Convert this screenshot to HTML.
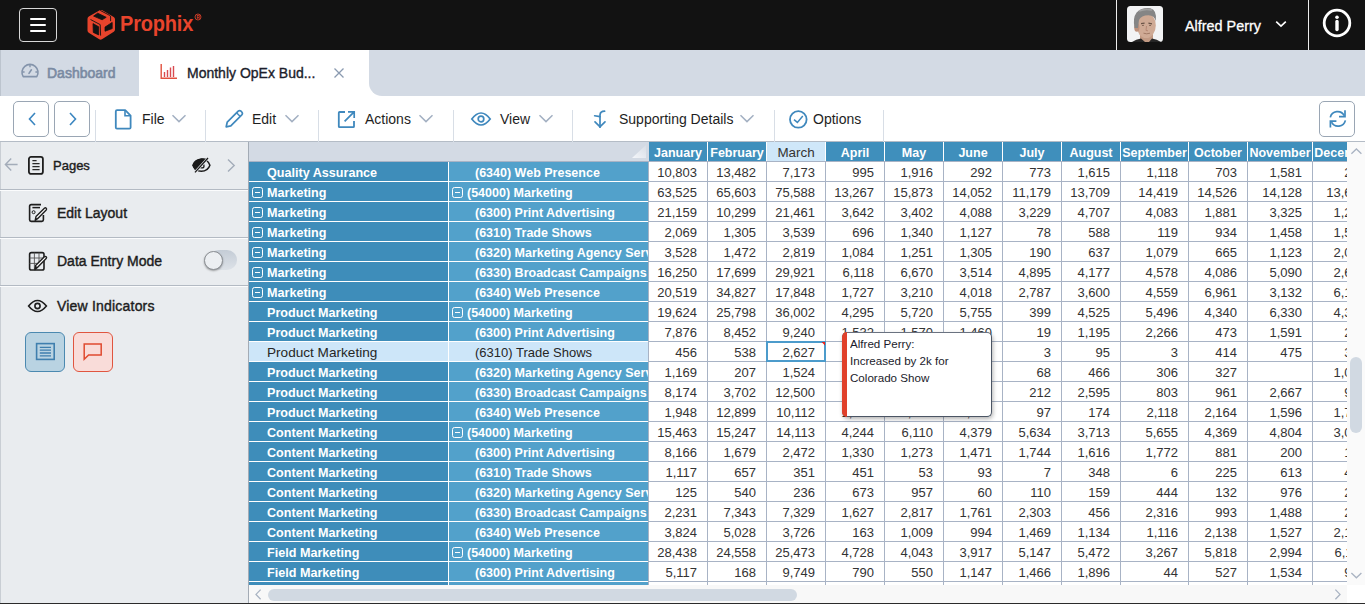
<!DOCTYPE html>
<html><head><meta charset="utf-8"><style>
*{box-sizing:border-box;margin:0;padding:0}
html,body{width:1365px;height:604px;overflow:hidden;background:#fff;font-family:"Liberation Sans",sans-serif;position:relative}
.abs{position:absolute}
#top{position:absolute;left:0;top:0;width:1365px;height:50px;background:#121212}
#hamb{position:absolute;left:19px;top:8px;width:38px;height:34px;border:1.3px solid #d8d8d8;border-radius:4px}
#hamb i{position:absolute;left:10px;width:16px;height:2px;background:#fff;border-radius:1px}
#tabs{position:absolute;left:0;top:50px;width:1365px;height:46px;background:#fff}
#tabdash{position:absolute;left:0;top:0;width:139px;height:46px;background:#d3dae4;border-left:1px solid #bcc4ce}
#tabrest{position:absolute;left:369px;top:0;width:996px;height:46px;background:#d3dae4;border-bottom-left-radius:13px}
#toolbar{position:absolute;left:0;top:96px;width:1365px;height:46px;background:#fff;border-bottom:1px solid #b4bcc6}
.tbtn{position:absolute;top:5px;width:36px;height:36px;border:1px solid #9aa6b4;border-radius:5px;background:#fff}
.sep{position:absolute;top:14px;width:1px;height:32px;background:#d8dee6}
.tl{position:absolute;top:15px;font-size:14px;color:#1e1e1e;line-height:17px;white-space:nowrap}
#left{position:absolute;left:0;top:142px;width:249px;height:462px;background:#e9ecef;border-right:1px solid #a3abb5}
.lsep{position:absolute;left:0;width:248px;height:2px;border-top:1px solid #b3bac3;background:#fbfcfd}
.ll{position:absolute;font-size:14px;color:#1d1d1d;white-space:nowrap;line-height:16px;-webkit-text-stroke:0.4px #1d1d1d}
#grid{position:absolute;left:249px;top:142px;width:1098px;height:443px;overflow:hidden;background:#a8b3c5}
#grid div{position:absolute;white-space:nowrap;overflow:hidden}
.hc{background:#3f8fbc;color:#fff;font-weight:bold;font-size:12.5px;text-align:center;line-height:21px;padding-top:1px}
.hc.sel{background:#cfe7f9;color:#333;font-weight:normal;font-size:13.4px;padding-top:0}
.hc.corner{background:#d3dae4}
.ra{left:0;width:199px;height:19px;background:#3e8dba;color:#fff;font-weight:bold;font-size:12.6px;line-height:21px;padding-top:1px}
.rb{left:200px;width:199px;height:19px;background:#52a1cb;color:#fff;font-weight:bold;font-size:12.5px;line-height:21px;padding-top:1px}
.selr{background:#cde6f9 !important;color:#262626 !important;font-weight:normal !important;font-size:13px !important;padding-top:0 !important}
.ra.selr{font-size:13.6px !important}
.pn{padding-left:18px}.pa{padding-left:18px}
.pn2{padding-left:26px}.pa2{padding-left:18px}
.dc{height:19px;background:#fff;color:#333;font-size:13px;text-align:right;padding-right:10px;line-height:21px}
.ex{position:absolute;left:3px;top:5px;width:11px;height:11px;border:1px solid #fff;border-radius:2.5px}
.ex:after{content:"";position:absolute;left:2px;top:4px;width:5px;height:1px;background:#fff}

</style></head><body>
<div id="top">
  <div id="hamb"><i style="top:8.6px"></i><i style="top:14.6px"></i><i style="top:20.6px"></i></div>
  <svg class="abs" style="left:86px;top:9px" width="31" height="33" viewBox="0 0 31 33">
    <path d="M15 3.6 L26.4 10.2 L26.4 20.6 L14.6 28 L4.1 21.5 L4.1 9.8 Z" fill="#e8442c" stroke="#e8442c" stroke-width="5.2" stroke-linejoin="round"/>
    <path d="M7.6 7.1 L11.7 4.2 L20.2 8.3 L16.1 10.8 Z" fill="#121212" stroke="#121212" stroke-width="0.8" stroke-linejoin="round"/>
    <path d="M7 14.6 L12.7 17.8 L12.7 25.9 L7.3 23.4 Z" fill="#121212" stroke="#121212" stroke-width="0.8" stroke-linejoin="round"/>
    <path d="M19 18.1 L26.2 13.4 L26.2 19.6 L19 22.2 Z" fill="#121212" stroke="#121212" stroke-width="0.8" stroke-linejoin="round"/>
    <path d="M14.2 1.4 L23.7 6.4 Q24.6 7 24.6 8 L24.6 12.1 M4.5 10.5 L14.2 15.6 L14.6 26.6" fill="none" stroke="#121212" stroke-width="0.9"/>
  </svg>
  <div class="abs" style="left:120px;top:9px;font-size:22.5px;font-weight:bold;color:#e8442c;line-height:30px;transform:scaleX(0.887);transform-origin:0 0;letter-spacing:-0.2px">Prophix</div>
  <svg class="abs" style="left:194px;top:13px" width="8" height="8" viewBox="0 0 8 8"><circle cx="4" cy="4" r="3" fill="none" stroke="#e8442c" stroke-width="0.8"/><text x="4" y="5.6" font-size="4.5" font-family="Liberation Sans" font-weight="bold" fill="#e8442c" text-anchor="middle">R</text></svg>
  <div class="abs" style="left:1116px;top:0;width:1px;height:50px;background:#ececec"></div>
  <div class="abs" style="left:1308px;top:0;width:1px;height:50px;background:#ececec"></div>
  <svg class="abs" style="left:1127px;top:6px" width="36" height="36" viewBox="0 0 36 36">
    <defs><clipPath id="av"><rect x="0" y="0" width="36" height="36" rx="3.5"/></clipPath></defs>
    <g clip-path="url(#av)">
      <rect width="36" height="36" fill="#f2f3f4"/>
      <rect x="13" y="26" width="13" height="10" fill="#c19983"/>
      <path d="M5 36 Q9 33 14 32.5 L18 36 Z M22 36 L25 32.5 Q30 33 34 36 Z" fill="#262626"/>
      <ellipse cx="19.2" cy="19.5" rx="9.6" ry="12.6" fill="#cfaa95"/>
      <ellipse cx="9.8" cy="21.5" rx="2.6" ry="4.2" fill="#bf917b"/>
      <path d="M7.6 22 Q5.4 12 9.6 6.4 Q15 1.2 23.5 2.2 Q30.2 4 28.8 15 Q27.5 9.5 21.5 9.2 Q14 9.2 12 14 L11 22 Z" fill="#858585"/>
      <path d="M12 5 Q18 2.4 25 4" stroke="#a3a3a3" stroke-width="1.6" fill="none"/>
      <path d="M14 17.6 L17.6 17.2 M21.4 17.2 L25 17.8" stroke="#6b5548" stroke-width="1.2"/>
      <path d="M15 19.5 L17 19.3 M22 19.3 L24 19.5" stroke="#7a5f50" stroke-width="0.9"/>
      <path d="M19.5 20 L19 24.5 L21 24.8" stroke="#b38672" stroke-width="0.9" fill="none"/>
      <path d="M16.5 27.2 Q19.5 28.4 23 27.2" stroke="#a27a66" stroke-width="1" fill="none"/>
    </g>
  </svg>
  <div class="abs" style="left:1185px;top:16.5px;font-size:14.4px;color:#fff;line-height:18px;-webkit-text-stroke:0.3px #fff">Alfred Perry</div>
  <svg class="abs" style="left:1274px;top:19px" width="14" height="10" viewBox="0 0 14 10"><path d="M2.2 2.6 L7 7.2 L11.8 2.6" fill="none" stroke="#fff" stroke-width="1.6"/></svg>
  <svg class="abs" style="left:1321px;top:7px" width="32" height="32" viewBox="0 0 32 32">
    <circle cx="16" cy="16" r="12.8" fill="none" stroke="#fff" stroke-width="2.8"/>
    <circle cx="16" cy="10.3" r="1.8" fill="#fff"/>
    <path d="M16 14.5 L16 22.5" stroke="#fff" stroke-width="3.4" stroke-linecap="round"/>
  </svg>
</div>
<div id="tabs">
  <div id="tabdash"></div>
  <div id="tabrest"></div>
  <svg class="abs" style="left:20px;top:12px" width="20" height="20" viewBox="0 0 20 20">
    <path d="M3.2 14.6 A8 8 0 1 1 16.8 14.6 Z" fill="none" stroke="#8494ab" stroke-width="1.6" stroke-linejoin="round"/>
    <path d="M10 3 L10 5.2 M2.6 10 L4.6 10 M15.4 10 L17.4 10" stroke="#8494ab" stroke-width="1.4"/>
    <path d="M9 11.4 L11.4 7.8" stroke="#8494ab" stroke-width="1.6" stroke-linecap="round"/>
  </svg>
  <div class="abs" style="left:47px;top:14.5px;font-size:14px;color:#7a8aa2;line-height:16px;-webkit-text-stroke:0.6px #7a8aa2">Dashboard</div>
  <svg class="abs" style="left:160px;top:13px" width="18" height="17" viewBox="0 0 18 17">
    <path d="M1.2 1 L1.2 15.2 L17 15.2" fill="none" stroke="#e2503f" stroke-width="1.4"/>
    <path d="M4.5 14 L4.5 9 M7.5 14 L7.5 7 M10.5 14 L10.5 4.5 M13.5 14 L13.5 3" stroke="#d94a50" stroke-width="1.4"/>
  </svg>
  <div class="abs" style="left:187px;top:14.5px;font-size:14px;color:#1b1d2b;line-height:16px;-webkit-text-stroke:0.35px #1b1d2b">Monthly OpEx Bud...</div>
  <svg class="abs" style="left:333px;top:17px" width="12" height="12" viewBox="0 0 12 12"><path d="M1.5 1.5 L10.5 10.5 M10.5 1.5 L1.5 10.5" stroke="#8a9ab0" stroke-width="1.3"/></svg>
</div>
<div id="toolbar">
  <div class="tbtn" style="left:13px"><svg class="abs" style="left:13px;top:9px" width="10" height="16" viewBox="0 0 10 16"><path d="M8 2 L2.5 8 L8 14" fill="none" stroke="#3b86c0" stroke-width="1.6"/></svg></div>
  <div class="tbtn" style="left:54px"><svg class="abs" style="left:13px;top:9px" width="10" height="16" viewBox="0 0 10 16"><path d="M2 2 L7.5 8 L2 14" fill="none" stroke="#3b86c0" stroke-width="1.6"/></svg></div>
  <div class="sep" style="left:95px"></div>
  <svg class="abs" style="left:114px;top:13px" width="19" height="21" viewBox="0 0 19 21">
    <path d="M3 1.2 L11.2 1.2 L16.6 6.6 L16.6 18.4 Q16.6 19.6 15.4 19.6 L3 19.6 Q1.8 19.6 1.8 18.4 L1.8 2.4 Q1.8 1.2 3 1.2 Z" fill="none" stroke="#3f88bd" stroke-width="1.8" stroke-linejoin="round"/>
    <path d="M11 1.4 L11 6.8 L16.4 6.8" fill="none" stroke="#3f88bd" stroke-width="1.6"/>
  </svg>
  <div class="tl" style="left:142px">File</div>
  <svg class="abs" style="left:171px;top:18px" width="16" height="9" viewBox="0 0 16 9"><path d="M1.5 1.2 L8 7.6 L14.5 1.2" fill="none" stroke="#a3b0c2" stroke-width="1.5"/></svg>
  <div class="sep" style="left:205px"></div>
  <svg class="abs" style="left:224px;top:13px" width="20" height="20" viewBox="0 0 20 20">
    <path d="M2.2 17.8 L3.2 13.2 L14.2 2.2 Q15.6 1 17 2.2 L17.8 3 Q19 4.4 17.8 5.8 L6.8 16.8 Z" fill="none" stroke="#3f88bd" stroke-width="1.7" stroke-linejoin="round"/>
    <path d="M12.6 3.8 L16.2 7.4" stroke="#3f88bd" stroke-width="1.4"/>
  </svg>
  <div class="tl" style="left:252px">Edit</div>
  <svg class="abs" style="left:284px;top:18px" width="16" height="9" viewBox="0 0 16 9"><path d="M1.5 1.2 L8 7.6 L14.5 1.2" fill="none" stroke="#a3b0c2" stroke-width="1.5"/></svg>
  <div class="sep" style="left:318px"></div>
  <svg class="abs" style="left:337px;top:14px" width="19" height="19" viewBox="0 0 19 19">
    <path d="M8 2 L2.6 2 Q1.8 2 1.8 2.8 L1.8 16.4 Q1.8 17.2 2.6 17.2 L16.2 17.2 Q17 17.2 17 16.4 L17 11" fill="none" stroke="#3f88bd" stroke-width="1.8"/>
    <path d="M7.6 11.4 L16.6 2.4 M11 1.9 L17.2 1.9 L17.2 8" fill="none" stroke="#3f88bd" stroke-width="1.7"/>
  </svg>
  <div class="tl" style="left:365px">Actions</div>
  <svg class="abs" style="left:418px;top:18px" width="16" height="9" viewBox="0 0 16 9"><path d="M1.5 1.2 L8 7.6 L14.5 1.2" fill="none" stroke="#a3b0c2" stroke-width="1.5"/></svg>
  <div class="sep" style="left:453px"></div>
  <svg class="abs" style="left:470px;top:15px" width="22" height="16" viewBox="0 0 22 16">
    <path d="M1.8 8 Q11 -4 20.2 8 Q11 20 1.8 8 Z" fill="none" stroke="#3f88bd" stroke-width="1.7"/>
    <circle cx="11" cy="8" r="2.8" fill="none" stroke="#3f88bd" stroke-width="1.7"/>
  </svg>
  <div class="tl" style="left:500px">View</div>
  <svg class="abs" style="left:538px;top:18px" width="16" height="9" viewBox="0 0 16 9"><path d="M1.5 1.2 L8 7.6 L14.5 1.2" fill="none" stroke="#a3b0c2" stroke-width="1.5"/></svg>
  <div class="sep" style="left:572px"></div>
  <svg class="abs" style="left:593px;top:14px" width="14" height="19" viewBox="0 0 14 19">
    <path d="M11.6 1.2 Q7.2 1.2 7 5 L7 17.2" fill="none" stroke="#3f88bd" stroke-width="1.7" stroke-linecap="round"/>
    <path d="M2 11.8 L7 16.8 L12 11.8" fill="none" stroke="#3f88bd" stroke-width="1.7" stroke-linecap="round"/>
    <path d="M1.6 5.8 L7 6.6" fill="none" stroke="#3f88bd" stroke-width="1.6" stroke-linecap="round"/>
  </svg>
  <div class="tl" style="left:619px">Supporting Details</div>
  <svg class="abs" style="left:739px;top:18px" width="16" height="9" viewBox="0 0 16 9"><path d="M1.5 1.2 L8 7.6 L14.5 1.2" fill="none" stroke="#a3b0c2" stroke-width="1.5"/></svg>
  <div class="sep" style="left:774px"></div>
  <svg class="abs" style="left:788px;top:13px" width="21" height="21" viewBox="0 0 21 21">
    <circle cx="10.3" cy="10.4" r="8.3" fill="none" stroke="#3f88bd" stroke-width="1.8"/>
    <path d="M6 10.6 L9.4 13.4 L14.8 7" fill="none" stroke="#3f88bd" stroke-width="1.5"/>
  </svg>
  <div class="tl" style="left:813px">Options</div>
  <div class="sep" style="left:883px"></div>
  <div class="tbtn" style="left:1319px"><svg class="abs" style="left:6px;top:5px" width="24" height="24" viewBox="0 0 24 24">
    <path d="M4.3 10.4 A7.5 7.5 0 0 1 18.2 8.6" fill="none" stroke="#3f88bd" stroke-width="1.7"/>
    <path d="M19 3.2 L19 9.6 L13 9.6" fill="none" stroke="#3f88bd" stroke-width="1.7"/>
    <path d="M19.4 13.4 A7.5 7.5 0 0 1 5.5 15.2" fill="none" stroke="#3f88bd" stroke-width="1.7"/>
    <path d="M4.4 20.4 L4.4 14.2 L10.4 14.2" fill="none" stroke="#3f88bd" stroke-width="1.7"/>
  </svg></div>
</div>
<div id="left">
  <div class="abs" style="left:0;top:0;width:1px;height:462px;background:#c9ced4"></div>
  <div class="lsep" style="top:47px"></div>
  <div class="lsep" style="top:95px"></div>
  <div class="lsep" style="top:143px"></div>
  <svg class="abs" style="left:4px;top:15px" width="15" height="15" viewBox="0 0 15 15"><path d="M13.6 7.5 L1.6 7.5 M7.2 1.6 L1.4 7.5 L7.2 13.4" fill="none" stroke="#a3acb9" stroke-width="1.4"/></svg>
  <svg class="abs" style="left:27px;top:13px" width="18" height="21" viewBox="0 0 18 21">
    <rect x="1.9" y="1.9" width="14" height="17" rx="2.2" fill="none" stroke="#1e1e1e" stroke-width="1.8"/>
    <path d="M5.4 5.6 L9.6 5.6 M5.4 8.6 L12.6 8.6 M5.4 11.6 L12.6 11.6 M5.4 14.6 L12.6 14.6" stroke="#2a2a2a" stroke-width="1.3"/>
  </svg>
  <div class="ll" style="left:53px;top:16px;font-size:13px">Pages</div>
  <svg class="abs" style="left:192px;top:13px" width="20" height="20" viewBox="0 0 20 20">
    <path d="M0.9 10.2 C3.6 2.2 15.2 2.2 17.9 10.2 C15.2 18.2 3.6 18.2 0.9 10.2 Z" fill="none" stroke="#1a1a1a" stroke-width="1.5"/>
    <path d="M0.9 10.2 C3 4 10 2.2 15.2 4 L4 16.6 C2.6 14.8 1.6 12.4 0.9 10.2 Z" fill="#1a1a1a"/>
    <circle cx="10" cy="10.9" r="2" fill="none" stroke="#1a1a1a" stroke-width="1.3"/>
    <path d="M16 3 L3 17.4" stroke="#e9ecef" stroke-width="2.6"/>
    <path d="M16 3 L3 17.4" stroke="#1a1a1a" stroke-width="1.3"/>
  </svg>
  <svg class="abs" style="left:226px;top:16px" width="11" height="15" viewBox="0 0 11 15"><path d="M2 1.4 L8.2 7.5 L2 13.6" fill="none" stroke="#a3acb9" stroke-width="1.4"/></svg>

  <svg class="abs" style="left:28px;top:61px" width="20" height="20" viewBox="0 0 20 20">
    <path d="M13 1.6 L3.2 1.6 Q1.6 1.6 1.6 3.2 L1.6 16.8 Q1.6 18.4 3.2 18.4 L13.8 18.4 Q15.4 18.4 15.4 16.8 L15.4 12" fill="none" stroke="#1e1e1e" stroke-width="1.6"/>
    <path d="M4.4 4.6 L12 4.6" stroke="#1e1e1e" stroke-width="1.5"/>
    <circle cx="5.6" cy="9.2" r="1.5" fill="none" stroke="#1e1e1e" stroke-width="1"/>
    <path d="M7.2 17.4 L8 13.6 L16.4 5.2 Q17.4 4.4 18.2 5.2 Q19 6 18.2 7 L9.8 15.4 Z" fill="#fff" stroke="#1e1e1e" stroke-width="1.4" stroke-linejoin="round"/>
  </svg>
  <div class="ll" style="left:57px;top:63px">Edit Layout</div>

  <svg class="abs" style="left:28px;top:109px" width="20" height="21" viewBox="0 0 20 21">
    <rect x="1.6" y="1.6" width="14.4" height="17.4" rx="1.8" fill="none" stroke="#1e1e1e" stroke-width="1.6"/>
    <path d="M6.4 1.6 L6.4 19 M11 1.6 L11 12 M1.6 7 L16 7 M1.6 12.4 L12 12.4" stroke="#555" stroke-width="0.9"/>
    <path d="M6.8 18.6 L7.6 14.6 L16.4 5.8 Q17.4 5 18.2 5.8 Q19 6.6 18.2 7.6 L9.4 16.4 Z" fill="#fff" stroke="#1e1e1e" stroke-width="1.4" stroke-linejoin="round"/>
    <path d="M6.8 18.6 L7.6 14.6 L9.4 16.4 Z" fill="#1e1e1e"/>
  </svg>
  <div class="ll" style="left:57px;top:111px">Data Entry Mode</div>
  <div class="abs" style="left:209px;top:108px;width:28px;height:19.5px;border-radius:10px;background:linear-gradient(#c4ccd6,#dde2e8)"></div>
  <div class="abs" style="left:203.5px;top:108.5px;width:19px;height:19px;border-radius:50%;background:#eceff2;border:1px solid #8b8f94;box-shadow:0 1px 2px rgba(0,0,0,0.35)"></div>

  <svg class="abs" style="left:27px;top:156px" width="21" height="16" viewBox="0 0 21 16">
    <path d="M1.6 8 Q10.5 -3 19.4 8 Q10.5 19 1.6 8 Z" fill="none" stroke="#1e1e1e" stroke-width="1.6"/>
    <circle cx="10.5" cy="8" r="2.6" fill="none" stroke="#1e1e1e" stroke-width="1.6"/>
  </svg>
  <div class="ll" style="left:57px;top:156px;letter-spacing:0.2px">View Indicators</div>

  <div class="abs" style="left:25px;top:190px;width:40px;height:40px;border-radius:6px;background:#b9d3e2;border:1.3px solid #4b89b0"></div>
  <svg class="abs" style="left:35px;top:200px" width="21" height="19" viewBox="0 0 21 19">
    <rect x="1.6" y="1.6" width="17.6" height="15.8" fill="none" stroke="#3f7fae" stroke-width="1.6"/>
    <path d="M4.8 5.4 L16 5.4 M4.8 8.2 L16 8.2 M4.8 11 L16 11 M4.8 13.8 L16 13.8" stroke="#3f7fae" stroke-width="1.3"/>
  </svg>
  <div class="abs" style="left:73px;top:190px;width:40px;height:40px;border-radius:6px;background:#f9dcd9;border:1.3px solid #e0553f"></div>
  <svg class="abs" style="left:82px;top:200px" width="21" height="19" viewBox="0 0 21 19">
    <path d="M2.2 2 L19.2 2 L19.2 13 L6.6 13 L2.2 17.2 Z" fill="none" stroke="#e04a2f" stroke-width="1.5" stroke-linejoin="miter"/>
  </svg>
</div>
<div id="grid">
<div style="left:0;top:20px;width:399px;height:423px;background:#fff"></div>
<div style="left:400px;top:0;width:700px;height:19px;background:#fff"></div>
<div class="hc corner" style="left:0;top:0;width:400px;height:19px"></div>
<div class="hc" style="left:400px;top:0;width:58px;height:19px">January</div>
<div class="hc" style="left:459px;top:0;width:58px;height:19px">February</div>
<div class="hc sel" style="left:518px;top:0;width:58px;height:19px">March</div>
<div class="hc" style="left:577px;top:0;width:58px;height:19px">April</div>
<div class="hc" style="left:636px;top:0;width:58px;height:19px">May</div>
<div class="hc" style="left:695px;top:0;width:58px;height:19px">June</div>
<div class="hc" style="left:754px;top:0;width:58px;height:19px">July</div>
<div class="hc" style="left:813px;top:0;width:58px;height:19px">August</div>
<div class="hc" style="left:872px;top:0;width:67px;height:19px">September</div>
<div class="hc" style="left:940px;top:0;width:58px;height:19px">October</div>
<div class="hc" style="left:999px;top:0;width:64px;height:19px">November</div>
<div class="hc" style="left:1064px;top:0;width:63px;height:19px">December</div>
<div class="ra pn" style="top:20px">Quality Assurance</div>
<div class="rb pn2" style="top:20px">(6340) Web Presence</div>
<div class="dc" style="left:400px;top:20px;width:58px">10,803</div>
<div class="dc" style="left:459px;top:20px;width:58px">13,482</div>
<div class="dc" style="left:518px;top:20px;width:58px">7,173</div>
<div class="dc" style="left:577px;top:20px;width:58px">995</div>
<div class="dc" style="left:636px;top:20px;width:58px">1,916</div>
<div class="dc" style="left:695px;top:20px;width:58px">292</div>
<div class="dc" style="left:754px;top:20px;width:58px">773</div>
<div class="dc" style="left:813px;top:20px;width:58px">1,615</div>
<div class="dc" style="left:872px;top:20px;width:67px">1,118</div>
<div class="dc" style="left:940px;top:20px;width:58px">703</div>
<div class="dc" style="left:999px;top:20px;width:64px">1,581</div>
<div class="dc" style="left:1064px;top:20px;width:63px">231</div>
<div class="ra pa" style="top:40px"><span class="ex"></span>Marketing</div>
<div class="rb pa2" style="top:40px"><span class="ex"></span>(54000) Marketing</div>
<div class="dc" style="left:400px;top:40px;width:58px">63,525</div>
<div class="dc" style="left:459px;top:40px;width:58px">65,603</div>
<div class="dc" style="left:518px;top:40px;width:58px">75,588</div>
<div class="dc" style="left:577px;top:40px;width:58px">13,267</div>
<div class="dc" style="left:636px;top:40px;width:58px">15,873</div>
<div class="dc" style="left:695px;top:40px;width:58px">14,052</div>
<div class="dc" style="left:754px;top:40px;width:58px">11,179</div>
<div class="dc" style="left:813px;top:40px;width:58px">13,709</div>
<div class="dc" style="left:872px;top:40px;width:67px">14,419</div>
<div class="dc" style="left:940px;top:40px;width:58px">14,526</div>
<div class="dc" style="left:999px;top:40px;width:64px">14,128</div>
<div class="dc" style="left:1064px;top:40px;width:63px">13,642</div>
<div class="ra pa" style="top:60px"><span class="ex"></span>Marketing</div>
<div class="rb pn2" style="top:60px">(6300) Print Advertising</div>
<div class="dc" style="left:400px;top:60px;width:58px">21,159</div>
<div class="dc" style="left:459px;top:60px;width:58px">10,299</div>
<div class="dc" style="left:518px;top:60px;width:58px">21,461</div>
<div class="dc" style="left:577px;top:60px;width:58px">3,642</div>
<div class="dc" style="left:636px;top:60px;width:58px">3,402</div>
<div class="dc" style="left:695px;top:60px;width:58px">4,088</div>
<div class="dc" style="left:754px;top:60px;width:58px">3,229</div>
<div class="dc" style="left:813px;top:60px;width:58px">4,707</div>
<div class="dc" style="left:872px;top:60px;width:67px">4,083</div>
<div class="dc" style="left:940px;top:60px;width:58px">1,881</div>
<div class="dc" style="left:999px;top:60px;width:64px">3,325</div>
<div class="dc" style="left:1064px;top:60px;width:63px">1,234</div>
<div class="ra pa" style="top:80px"><span class="ex"></span>Marketing</div>
<div class="rb pn2" style="top:80px">(6310) Trade Shows</div>
<div class="dc" style="left:400px;top:80px;width:58px">2,069</div>
<div class="dc" style="left:459px;top:80px;width:58px">1,305</div>
<div class="dc" style="left:518px;top:80px;width:58px">3,539</div>
<div class="dc" style="left:577px;top:80px;width:58px">696</div>
<div class="dc" style="left:636px;top:80px;width:58px">1,340</div>
<div class="dc" style="left:695px;top:80px;width:58px">1,127</div>
<div class="dc" style="left:754px;top:80px;width:58px">78</div>
<div class="dc" style="left:813px;top:80px;width:58px">588</div>
<div class="dc" style="left:872px;top:80px;width:67px">119</div>
<div class="dc" style="left:940px;top:80px;width:58px">934</div>
<div class="dc" style="left:999px;top:80px;width:64px">1,458</div>
<div class="dc" style="left:1064px;top:80px;width:63px">1,512</div>
<div class="ra pa" style="top:100px"><span class="ex"></span>Marketing</div>
<div class="rb pn2" style="top:100px">(6320) Marketing Agency Services</div>
<div class="dc" style="left:400px;top:100px;width:58px">3,528</div>
<div class="dc" style="left:459px;top:100px;width:58px">1,472</div>
<div class="dc" style="left:518px;top:100px;width:58px">2,819</div>
<div class="dc" style="left:577px;top:100px;width:58px">1,084</div>
<div class="dc" style="left:636px;top:100px;width:58px">1,251</div>
<div class="dc" style="left:695px;top:100px;width:58px">1,305</div>
<div class="dc" style="left:754px;top:100px;width:58px">190</div>
<div class="dc" style="left:813px;top:100px;width:58px">637</div>
<div class="dc" style="left:872px;top:100px;width:67px">1,079</div>
<div class="dc" style="left:940px;top:100px;width:58px">665</div>
<div class="dc" style="left:999px;top:100px;width:64px">1,123</div>
<div class="dc" style="left:1064px;top:100px;width:63px">2,045</div>
<div class="ra pa" style="top:120px"><span class="ex"></span>Marketing</div>
<div class="rb pn2" style="top:120px">(6330) Broadcast Campaigns</div>
<div class="dc" style="left:400px;top:120px;width:58px">16,250</div>
<div class="dc" style="left:459px;top:120px;width:58px">17,699</div>
<div class="dc" style="left:518px;top:120px;width:58px">29,921</div>
<div class="dc" style="left:577px;top:120px;width:58px">6,118</div>
<div class="dc" style="left:636px;top:120px;width:58px">6,670</div>
<div class="dc" style="left:695px;top:120px;width:58px">3,514</div>
<div class="dc" style="left:754px;top:120px;width:58px">4,895</div>
<div class="dc" style="left:813px;top:120px;width:58px">4,177</div>
<div class="dc" style="left:872px;top:120px;width:67px">4,578</div>
<div class="dc" style="left:940px;top:120px;width:58px">4,086</div>
<div class="dc" style="left:999px;top:120px;width:64px">5,090</div>
<div class="dc" style="left:1064px;top:120px;width:63px">2,678</div>
<div class="ra pa" style="top:140px"><span class="ex"></span>Marketing</div>
<div class="rb pn2" style="top:140px">(6340) Web Presence</div>
<div class="dc" style="left:400px;top:140px;width:58px">20,519</div>
<div class="dc" style="left:459px;top:140px;width:58px">34,827</div>
<div class="dc" style="left:518px;top:140px;width:58px">17,848</div>
<div class="dc" style="left:577px;top:140px;width:58px">1,727</div>
<div class="dc" style="left:636px;top:140px;width:58px">3,210</div>
<div class="dc" style="left:695px;top:140px;width:58px">4,018</div>
<div class="dc" style="left:754px;top:140px;width:58px">2,787</div>
<div class="dc" style="left:813px;top:140px;width:58px">3,600</div>
<div class="dc" style="left:872px;top:140px;width:67px">4,559</div>
<div class="dc" style="left:940px;top:140px;width:58px">6,961</div>
<div class="dc" style="left:999px;top:140px;width:64px">3,132</div>
<div class="dc" style="left:1064px;top:140px;width:63px">6,127</div>
<div class="ra pn" style="top:160px">Product Marketing</div>
<div class="rb pa2" style="top:160px"><span class="ex"></span>(54000) Marketing</div>
<div class="dc" style="left:400px;top:160px;width:58px">19,624</div>
<div class="dc" style="left:459px;top:160px;width:58px">25,798</div>
<div class="dc" style="left:518px;top:160px;width:58px">36,002</div>
<div class="dc" style="left:577px;top:160px;width:58px">4,295</div>
<div class="dc" style="left:636px;top:160px;width:58px">5,720</div>
<div class="dc" style="left:695px;top:160px;width:58px">5,755</div>
<div class="dc" style="left:754px;top:160px;width:58px">399</div>
<div class="dc" style="left:813px;top:160px;width:58px">4,525</div>
<div class="dc" style="left:872px;top:160px;width:67px">5,496</div>
<div class="dc" style="left:940px;top:160px;width:58px">4,340</div>
<div class="dc" style="left:999px;top:160px;width:64px">6,330</div>
<div class="dc" style="left:1064px;top:160px;width:63px">4,318</div>
<div class="ra pn" style="top:180px">Product Marketing</div>
<div class="rb pn2" style="top:180px">(6300) Print Advertising</div>
<div class="dc" style="left:400px;top:180px;width:58px">7,876</div>
<div class="dc" style="left:459px;top:180px;width:58px">8,452</div>
<div class="dc" style="left:518px;top:180px;width:58px">9,240</div>
<div class="dc" style="left:577px;top:180px;width:58px">1,532</div>
<div class="dc" style="left:636px;top:180px;width:58px">1,570</div>
<div class="dc" style="left:695px;top:180px;width:58px">1,460</div>
<div class="dc" style="left:754px;top:180px;width:58px">19</div>
<div class="dc" style="left:813px;top:180px;width:58px">1,195</div>
<div class="dc" style="left:872px;top:180px;width:67px">2,266</div>
<div class="dc" style="left:940px;top:180px;width:58px">473</div>
<div class="dc" style="left:999px;top:180px;width:64px">1,591</div>
<div class="dc" style="left:1064px;top:180px;width:63px">247</div>
<div class="ra selr pn" style="top:200px">Product Marketing</div>
<div class="rb selr pn2" style="top:200px">(6310) Trade Shows</div>
<div class="dc" style="left:400px;top:200px;width:58px">456</div>
<div class="dc" style="left:459px;top:200px;width:58px">538</div>
<div class="dc" style="left:518px;top:200px;width:58px">2,627</div>
<div class="dc" style="left:577px;top:200px;width:58px">1,201</div>
<div class="dc" style="left:636px;top:200px;width:58px">1,344</div>
<div class="dc" style="left:695px;top:200px;width:58px">1,120</div>
<div class="dc" style="left:754px;top:200px;width:58px">3</div>
<div class="dc" style="left:813px;top:200px;width:58px">95</div>
<div class="dc" style="left:872px;top:200px;width:67px">3</div>
<div class="dc" style="left:940px;top:200px;width:58px">414</div>
<div class="dc" style="left:999px;top:200px;width:64px">475</div>
<div class="dc" style="left:1064px;top:200px;width:63px">312</div>
<div class="ra pn" style="top:220px">Product Marketing</div>
<div class="rb pn2" style="top:220px">(6320) Marketing Agency Services</div>
<div class="dc" style="left:400px;top:220px;width:58px">1,169</div>
<div class="dc" style="left:459px;top:220px;width:58px">207</div>
<div class="dc" style="left:518px;top:220px;width:58px">1,524</div>
<div class="dc" style="left:577px;top:220px;width:58px">1,040</div>
<div class="dc" style="left:636px;top:220px;width:58px">1,210</div>
<div class="dc" style="left:695px;top:220px;width:58px">1,330</div>
<div class="dc" style="left:754px;top:220px;width:58px">68</div>
<div class="dc" style="left:813px;top:220px;width:58px">466</div>
<div class="dc" style="left:872px;top:220px;width:67px">306</div>
<div class="dc" style="left:940px;top:220px;width:58px">327</div>
<div class="dc" style="left:999px;top:220px;width:64px"></div>
<div class="dc" style="left:1064px;top:220px;width:63px">1,043</div>
<div class="ra pn" style="top:240px">Product Marketing</div>
<div class="rb pn2" style="top:240px">(6330) Broadcast Campaigns</div>
<div class="dc" style="left:400px;top:240px;width:58px">8,174</div>
<div class="dc" style="left:459px;top:240px;width:58px">3,702</div>
<div class="dc" style="left:518px;top:240px;width:58px">12,500</div>
<div class="dc" style="left:577px;top:240px;width:58px">1,620</div>
<div class="dc" style="left:636px;top:240px;width:58px">1,880</div>
<div class="dc" style="left:695px;top:240px;width:58px">1,990</div>
<div class="dc" style="left:754px;top:240px;width:58px">212</div>
<div class="dc" style="left:813px;top:240px;width:58px">2,595</div>
<div class="dc" style="left:872px;top:240px;width:67px">803</div>
<div class="dc" style="left:940px;top:240px;width:58px">961</div>
<div class="dc" style="left:999px;top:240px;width:64px">2,667</div>
<div class="dc" style="left:1064px;top:240px;width:63px">921</div>
<div class="ra pn" style="top:260px">Product Marketing</div>
<div class="rb pn2" style="top:260px">(6340) Web Presence</div>
<div class="dc" style="left:400px;top:260px;width:58px">1,948</div>
<div class="dc" style="left:459px;top:260px;width:58px">12,899</div>
<div class="dc" style="left:518px;top:260px;width:58px">10,112</div>
<div class="dc" style="left:577px;top:260px;width:58px">1,430</div>
<div class="dc" style="left:636px;top:260px;width:58px">1,100</div>
<div class="dc" style="left:695px;top:260px;width:58px">1,197</div>
<div class="dc" style="left:754px;top:260px;width:58px">97</div>
<div class="dc" style="left:813px;top:260px;width:58px">174</div>
<div class="dc" style="left:872px;top:260px;width:67px">2,118</div>
<div class="dc" style="left:940px;top:260px;width:58px">2,164</div>
<div class="dc" style="left:999px;top:260px;width:64px">1,596</div>
<div class="dc" style="left:1064px;top:260px;width:63px">1,734</div>
<div class="ra pn" style="top:280px">Content Marketing</div>
<div class="rb pa2" style="top:280px"><span class="ex"></span>(54000) Marketing</div>
<div class="dc" style="left:400px;top:280px;width:58px">15,463</div>
<div class="dc" style="left:459px;top:280px;width:58px">15,247</div>
<div class="dc" style="left:518px;top:280px;width:58px">14,113</div>
<div class="dc" style="left:577px;top:280px;width:58px">4,244</div>
<div class="dc" style="left:636px;top:280px;width:58px">6,110</div>
<div class="dc" style="left:695px;top:280px;width:58px">4,379</div>
<div class="dc" style="left:754px;top:280px;width:58px">5,634</div>
<div class="dc" style="left:813px;top:280px;width:58px">3,713</div>
<div class="dc" style="left:872px;top:280px;width:67px">5,655</div>
<div class="dc" style="left:940px;top:280px;width:58px">4,369</div>
<div class="dc" style="left:999px;top:280px;width:64px">4,804</div>
<div class="dc" style="left:1064px;top:280px;width:63px">3,021</div>
<div class="ra pn" style="top:300px">Content Marketing</div>
<div class="rb pn2" style="top:300px">(6300) Print Advertising</div>
<div class="dc" style="left:400px;top:300px;width:58px">8,166</div>
<div class="dc" style="left:459px;top:300px;width:58px">1,679</div>
<div class="dc" style="left:518px;top:300px;width:58px">2,472</div>
<div class="dc" style="left:577px;top:300px;width:58px">1,330</div>
<div class="dc" style="left:636px;top:300px;width:58px">1,273</div>
<div class="dc" style="left:695px;top:300px;width:58px">1,471</div>
<div class="dc" style="left:754px;top:300px;width:58px">1,744</div>
<div class="dc" style="left:813px;top:300px;width:58px">1,616</div>
<div class="dc" style="left:872px;top:300px;width:67px">1,772</div>
<div class="dc" style="left:940px;top:300px;width:58px">881</div>
<div class="dc" style="left:999px;top:300px;width:64px">200</div>
<div class="dc" style="left:1064px;top:300px;width:63px">123</div>
<div class="ra pn" style="top:320px">Content Marketing</div>
<div class="rb pn2" style="top:320px">(6310) Trade Shows</div>
<div class="dc" style="left:400px;top:320px;width:58px">1,117</div>
<div class="dc" style="left:459px;top:320px;width:58px">657</div>
<div class="dc" style="left:518px;top:320px;width:58px">351</div>
<div class="dc" style="left:577px;top:320px;width:58px">451</div>
<div class="dc" style="left:636px;top:320px;width:58px">53</div>
<div class="dc" style="left:695px;top:320px;width:58px">93</div>
<div class="dc" style="left:754px;top:320px;width:58px">7</div>
<div class="dc" style="left:813px;top:320px;width:58px">348</div>
<div class="dc" style="left:872px;top:320px;width:67px">6</div>
<div class="dc" style="left:940px;top:320px;width:58px">225</div>
<div class="dc" style="left:999px;top:320px;width:64px">613</div>
<div class="dc" style="left:1064px;top:320px;width:63px">412</div>
<div class="ra pn" style="top:340px">Content Marketing</div>
<div class="rb pn2" style="top:340px">(6320) Marketing Agency Services</div>
<div class="dc" style="left:400px;top:340px;width:58px">125</div>
<div class="dc" style="left:459px;top:340px;width:58px">540</div>
<div class="dc" style="left:518px;top:340px;width:58px">236</div>
<div class="dc" style="left:577px;top:340px;width:58px">673</div>
<div class="dc" style="left:636px;top:340px;width:58px">957</div>
<div class="dc" style="left:695px;top:340px;width:58px">60</div>
<div class="dc" style="left:754px;top:340px;width:58px">110</div>
<div class="dc" style="left:813px;top:340px;width:58px">159</div>
<div class="dc" style="left:872px;top:340px;width:67px">444</div>
<div class="dc" style="left:940px;top:340px;width:58px">132</div>
<div class="dc" style="left:999px;top:340px;width:64px">976</div>
<div class="dc" style="left:1064px;top:340px;width:63px">234</div>
<div class="ra pn" style="top:360px">Content Marketing</div>
<div class="rb pn2" style="top:360px">(6330) Broadcast Campaigns</div>
<div class="dc" style="left:400px;top:360px;width:58px">2,231</div>
<div class="dc" style="left:459px;top:360px;width:58px">7,343</div>
<div class="dc" style="left:518px;top:360px;width:58px">7,329</div>
<div class="dc" style="left:577px;top:360px;width:58px">1,627</div>
<div class="dc" style="left:636px;top:360px;width:58px">2,817</div>
<div class="dc" style="left:695px;top:360px;width:58px">1,761</div>
<div class="dc" style="left:754px;top:360px;width:58px">2,303</div>
<div class="dc" style="left:813px;top:360px;width:58px">456</div>
<div class="dc" style="left:872px;top:360px;width:67px">2,316</div>
<div class="dc" style="left:940px;top:360px;width:58px">993</div>
<div class="dc" style="left:999px;top:360px;width:64px">1,488</div>
<div class="dc" style="left:1064px;top:360px;width:63px">256</div>
<div class="ra pn" style="top:380px">Content Marketing</div>
<div class="rb pn2" style="top:380px">(6340) Web Presence</div>
<div class="dc" style="left:400px;top:380px;width:58px">3,824</div>
<div class="dc" style="left:459px;top:380px;width:58px">5,028</div>
<div class="dc" style="left:518px;top:380px;width:58px">3,726</div>
<div class="dc" style="left:577px;top:380px;width:58px">163</div>
<div class="dc" style="left:636px;top:380px;width:58px">1,009</div>
<div class="dc" style="left:695px;top:380px;width:58px">994</div>
<div class="dc" style="left:754px;top:380px;width:58px">1,469</div>
<div class="dc" style="left:813px;top:380px;width:58px">1,134</div>
<div class="dc" style="left:872px;top:380px;width:67px">1,116</div>
<div class="dc" style="left:940px;top:380px;width:58px">2,138</div>
<div class="dc" style="left:999px;top:380px;width:64px">1,527</div>
<div class="dc" style="left:1064px;top:380px;width:63px">2,134</div>
<div class="ra pn" style="top:400px">Field Marketing</div>
<div class="rb pa2" style="top:400px"><span class="ex"></span>(54000) Marketing</div>
<div class="dc" style="left:400px;top:400px;width:58px">28,438</div>
<div class="dc" style="left:459px;top:400px;width:58px">24,558</div>
<div class="dc" style="left:518px;top:400px;width:58px">25,473</div>
<div class="dc" style="left:577px;top:400px;width:58px">4,728</div>
<div class="dc" style="left:636px;top:400px;width:58px">4,043</div>
<div class="dc" style="left:695px;top:400px;width:58px">3,917</div>
<div class="dc" style="left:754px;top:400px;width:58px">5,147</div>
<div class="dc" style="left:813px;top:400px;width:58px">5,472</div>
<div class="dc" style="left:872px;top:400px;width:67px">3,267</div>
<div class="dc" style="left:940px;top:400px;width:58px">5,818</div>
<div class="dc" style="left:999px;top:400px;width:64px">2,994</div>
<div class="dc" style="left:1064px;top:400px;width:63px">6,112</div>
<div class="ra pn" style="top:420px">Field Marketing</div>
<div class="rb pn2" style="top:420px">(6300) Print Advertising</div>
<div class="dc" style="left:400px;top:420px;width:58px">5,117</div>
<div class="dc" style="left:459px;top:420px;width:58px">168</div>
<div class="dc" style="left:518px;top:420px;width:58px">9,749</div>
<div class="dc" style="left:577px;top:420px;width:58px">790</div>
<div class="dc" style="left:636px;top:420px;width:58px">550</div>
<div class="dc" style="left:695px;top:420px;width:58px">1,147</div>
<div class="dc" style="left:754px;top:420px;width:58px">1,466</div>
<div class="dc" style="left:813px;top:420px;width:58px">1,896</div>
<div class="dc" style="left:872px;top:420px;width:67px">44</div>
<div class="dc" style="left:940px;top:420px;width:58px">527</div>
<div class="dc" style="left:999px;top:420px;width:64px">1,534</div>
<div class="dc" style="left:1064px;top:420px;width:63px">945</div>
<div class="ra pn" style="top:440px">Field Marketing</div>
<div class="rb pn2" style="top:440px">(6310) Trade Shows</div>
<div class="dc" style="left:400px;top:440px;width:58px">1,000</div>
<div class="dc" style="left:459px;top:440px;width:58px">1,000</div>
<div class="dc" style="left:518px;top:440px;width:58px">1,000</div>
<div class="dc" style="left:577px;top:440px;width:58px">1,000</div>
<div class="dc" style="left:636px;top:440px;width:58px">1,000</div>
<div class="dc" style="left:695px;top:440px;width:58px">1,000</div>
<div class="dc" style="left:754px;top:440px;width:58px">1,000</div>
<div class="dc" style="left:813px;top:440px;width:58px">1,000</div>
<div class="dc" style="left:872px;top:440px;width:67px">1,000</div>
<div class="dc" style="left:940px;top:440px;width:58px">1,000</div>
<div class="dc" style="left:999px;top:440px;width:64px">1,000</div>
<div class="dc" style="left:1064px;top:440px;width:63px">1,000</div>
<svg style="position:absolute;left:382px;top:2px" width="16" height="15" viewBox="0 0 16 15"><path d="M15 1 L15 14 L1 14 Z" fill="url(#cg)"/><defs><linearGradient id="cg" x1="0" y1="1" x2="1" y2="0"><stop offset="0" stop-color="#f4f6fa"/><stop offset="1" stop-color="#d8dee6"/></linearGradient></defs></svg>
<div style="left:517px;top:199px;width:60px;height:21px;border:2px solid #4c9bcb;background:transparent"></div>
<svg style="position:absolute;left:572px;top:200px" width="5" height="5" viewBox="0 0 5 5"><path d="M0.6 0 L4 0 L4 3.4 Z" fill="#e8231b"/></svg>
<div style="left:593px;top:190px;width:150px;height:85px;background:#fff;border-radius:5px;border:1px solid #6a7280;border-right:1.3px solid #4b5564;border-bottom:1.3px solid #4b5564;box-shadow:1px 2px 4px rgba(0,0,0,0.3);overflow:visible"></div>
<div style="left:593px;top:190px;width:5px;height:85px;background:#e0402a;border-radius:5px 0 0 5px"></div>
<div style="left:601px;top:193px;font-size:11.6px;line-height:17px;color:#1b1b2b;white-space:pre">Alfred Perry:
Increased by 2k for
Colorado Show</div>
</div>
<div class="abs" style="left:1347px;top:142px;width:18px;height:443px;background:#fafafa"></div>
<svg class="abs" style="left:1350px;top:147px" width="13" height="9" viewBox="0 0 13 9"><path d="M1.4 6.8 L6.4 2 L11.4 6.8" fill="none" stroke="#a9b3c2" stroke-width="1.3"/></svg>
<div class="abs" style="left:1350px;top:357px;width:12px;height:76px;border-radius:6px;background:#d1d9e2"></div>
<svg class="abs" style="left:1350px;top:571px" width="13" height="9" viewBox="0 0 13 9"><path d="M1.4 2 L6.4 6.8 L11.4 2" fill="none" stroke="#a9b3c2" stroke-width="1.3"/></svg>
<div class="abs" style="left:249px;top:585px;width:1098px;height:18px;background:#f8f8f8"></div>
<svg class="abs" style="left:253px;top:588px" width="10" height="13" viewBox="0 0 10 13"><path d="M7.6 1.6 L3 6.4 L7.6 11.2" fill="none" stroke="#a9b3c2" stroke-width="1.3"/></svg>
<div class="abs" style="left:268px;top:589px;width:529px;height:12px;border-radius:6px;background:#d1d9e2"></div>
<svg class="abs" style="left:1333px;top:588px" width="10" height="13" viewBox="0 0 10 13"><path d="M2.4 1.6 L7 6.4 L2.4 11.2" fill="none" stroke="#a9b3c2" stroke-width="1.3"/></svg>
<div class="abs" style="left:0;top:603px;width:1365px;height:1px;background:#2b2b2b"></div>

</body></html>
